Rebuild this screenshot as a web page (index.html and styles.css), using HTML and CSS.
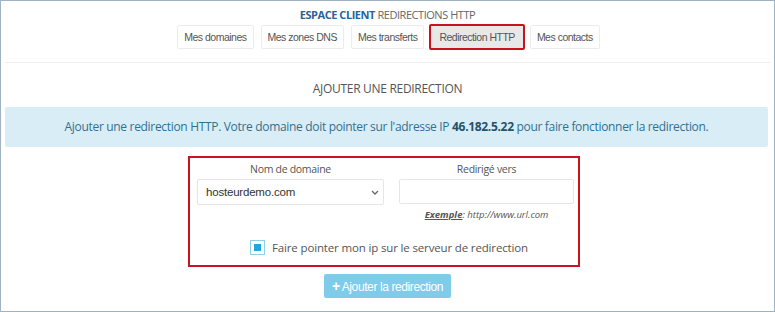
FILE: index.html
```html
<!DOCTYPE html>
<html lang="fr">
<head>
    <meta charset="UTF-8">
    <meta name="viewport" content="width=device-width, initial-scale=1.0">
    <title>Espace client - Redirections HTTP</title>
    <link rel="stylesheet" href="styles.css">
</head>
<body>
    <div class="frame">
        <div class="header">
            <div class="page-title"><b>ESPACE CLIENT</b> REDIRECTIONS HTTP</div>
            <div class="tabs">
                <a href="#" class="tab">Mes domaines</a>
                <a href="#" class="tab">Mes zones DNS</a>
                <a href="#" class="tab">Mes transferts</a>
                <a href="#" class="tab active">Redirection HTTP</a>
                <a href="#" class="tab">Mes contacts</a>
            </div>
        </div>

        <div class="content">
            <h2>AJOUTER UNE REDIRECTION</h2>
            <div class="info">
                Ajouter une redirection HTTP. Votre domaine doit pointer sur l'adresse IP <b>46.182.5.22</b> pour faire fonctionner la redirection.
            </div>

            <form class="redirect-form">
                <div class="fields">
                    <div class="field">
                        <label>Nom de domaine</label>
                        <div class="select-wrap">
                            <select>
                                <option>hosteurdemo.com</option>
                            </select>
                            <svg class="chevron" width="8" height="5" viewBox="0 0 8 5">
                                <path d="M1 1 L4 4 L7 1" fill="none" stroke="#666" stroke-width="1.3"/>
                            </svg>
                        </div>
                    </div>
                    <div class="field">
                        <label>Redirigé vers</label>
                        <input type="text">
                        <div class="hint"><b>Exemple</b>: http://www.url.com</div>
                    </div>
                </div>
                <div class="check-row">
                    <span class="checkbox"><span></span></span>
                    Faire pointer mon ip sur le serveur de redirection
                </div>
            </form>

            <div class="submit-row">
                <button class="btn-add"><span class="plus">+</span>Ajouter la redirection</button>
            </div>
        </div>
    </div>
</body>
</html>
```

FILE: styles.css
```css
/* CSS */
body {
    margin: 0;
    padding: 0;
    font-family: "Open Sans", sans-serif;
    background-color: #fff;
}

.frame {
    width: 773px;
    height: 310px;
    border: 1px solid #9fb3c4;
    overflow: hidden;
}

.header {
    text-align: center;
    padding-top: 7px;
    height: 54px;
    border-bottom: 1px solid #eee;
    margin: 0 4px;
}

.page-title {
    font-size: 11px;
    color: #666;
    letter-spacing: -0.45px;
    line-height: 14px;
}

.page-title b {
    color: #2a6496;
}

.tabs {
    display: flex;
    justify-content: center;
    gap: 7px;
    margin-top: 3px;
    margin-left: 2px;
}

.tab {
    display: block;
    font-family: "Liberation Sans", Arial, sans-serif;
    font-size: 10.5px;
    color: #555;
    text-decoration: none;
    border: 1px solid #ececec;
    border-radius: 2px;
    padding: 0 6px;
    height: 22px;
    line-height: 22px;
    letter-spacing: -0.5px;
}

.tab.active {
    background-color: #e8e8e8;
    border: 2px solid #c8121f;
    line-height: 22px;
    margin: -1px -2px;
    padding: 0 8px;
}

.content {
    text-align: center;
}

h2 {
    font-size: 12px;
    font-weight: normal;
    color: #555;
    margin: 17px 0 10px;
    letter-spacing: -0.3px;
}

.info {
    background-color: #d9edf7;
    color: #31708f;
    font-size: 12px;
    margin: 0 6px 0 4px;
    height: 40px;
    line-height: 40px;
    border-radius: 2px;
    letter-spacing: -0.32px;
}

.info b {
    color: #245269;
}

.redirect-form {
    width: 388px;
    height: 107px;
    margin: 9px 0 0 187px;
    border: 2px solid #cc1122;
}

.fields {
    display: flex;
    gap: 15px;
    padding: 4px 7px 0 7px;
}

.field {
    display: flex;
    flex-direction: column;
    align-items: center;
}

.field label {
    font-size: 10.5px;
    color: #555;
    line-height: 14px;
    margin-bottom: 3px;
    letter-spacing: -0.3px;
}

.select-wrap {
    position: relative;
}

.select-wrap select {
    appearance: none;
    -webkit-appearance: none;
    width: 187px;
    height: 26px;
    border: 1px solid #e6e6e6;
    border-radius: 2px;
    background-color: #fff;
    font-family: "Liberation Sans", Arial, sans-serif;
    font-size: 11.5px;
    color: #333;
    padding-left: 8px;
    letter-spacing: -0.2px;
}

.chevron {
    position: absolute;
    right: 5px;
    top: 11px;
}

.field input {
    width: 175px;
    height: 25px;
    border: 1px solid #e6e6e6;
    border-radius: 2px;
    box-sizing: border-box;
}

.hint {
    font-size: 9.5px;
    font-style: italic;
    color: #555;
    margin-top: 4px;
}

.hint b {
    text-decoration: underline;
}

.check-row {
    display: flex;
    align-items: center;
    justify-content: center;
    gap: 7px;
    font-size: 11.5px;
    color: #555;
    margin-top: 19px;
    margin-left: 10px;
    letter-spacing: -0.15px;
}

.checkbox {
    width: 13px;
    height: 13px;
    border: 1px solid #8fd0e8;
    display: flex;
    align-items: center;
    justify-content: center;
}

.checkbox span {
    width: 7px;
    height: 7px;
    background-color: #29a3d8;
}

.submit-row {
    margin-top: 7px;
}

.btn-add {
    background-color: #7fcbea;
    color: #fff;
    border: none;
    border-radius: 2px;
    font-family: "Liberation Sans", Arial, sans-serif;
    font-size: 12px;
    height: 24px;
    padding: 0 8px;
    letter-spacing: -0.4px;
}

.plus {
    font-weight: bold;
    font-size: 14px;
    margin-right: 2px;
}
```
